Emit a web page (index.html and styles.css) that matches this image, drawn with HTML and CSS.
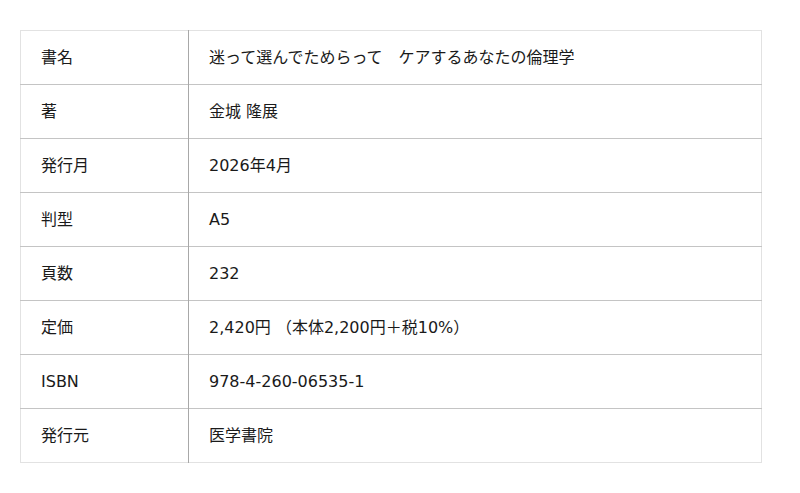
FILE: index.html
```html
<!DOCTYPE html>
<html lang="ja">
<head>
<meta charset="utf-8">
<link rel="stylesheet" href="styles.css">
</head>
<body>
<div class="page">
<table class="spec">
<tbody>
<tr><th>書名</th><td>迷って選んでためらって　ケアするあなたの倫理学</td></tr>
<tr><th>著</th><td>金城 隆展</td></tr>
<tr><th>発行月</th><td>2026年4月</td></tr>
<tr><th>判型</th><td>A5</td></tr>
<tr><th>頁数</th><td>232</td></tr>
<tr><th>定価</th><td>2,420円 （本体2,200円＋税10%）</td></tr>
<tr><th>ISBN</th><td>978-4-260-06535-1</td></tr>
<tr><th>発行元</th><td>医学書院</td></tr>
</tbody>
</table>
</div>
</body>
</html>
```

FILE: styles.css
```css
html, body {
  margin: 0;
  padding: 0;
  background: #ffffff;
}
.page {
  padding: 30px 20px;
}
.spec {
  width: 742px;
  border-collapse: collapse;
  border: 1px solid #e2e2e2;
  font-family: "DejaVu Sans", "Noto Sans CJK JP", sans-serif;
  font-size: 16px;
  line-height: 20px;
  color: #1a1a1a;
}
.spec tr {
  border-top: 1px solid #c4c4c4;
}
.spec tr:first-child {
  border-top: 1px solid #e2e2e2;
}
.spec th,
.spec td {
  height: 54px;
  padding: 0 20px;
  text-align: left;
  font-weight: normal;
  vertical-align: middle;
  box-sizing: border-box;
}
.spec th {
  width: 168px;
  border-right: 1px solid #a8a8a8;
}
```
